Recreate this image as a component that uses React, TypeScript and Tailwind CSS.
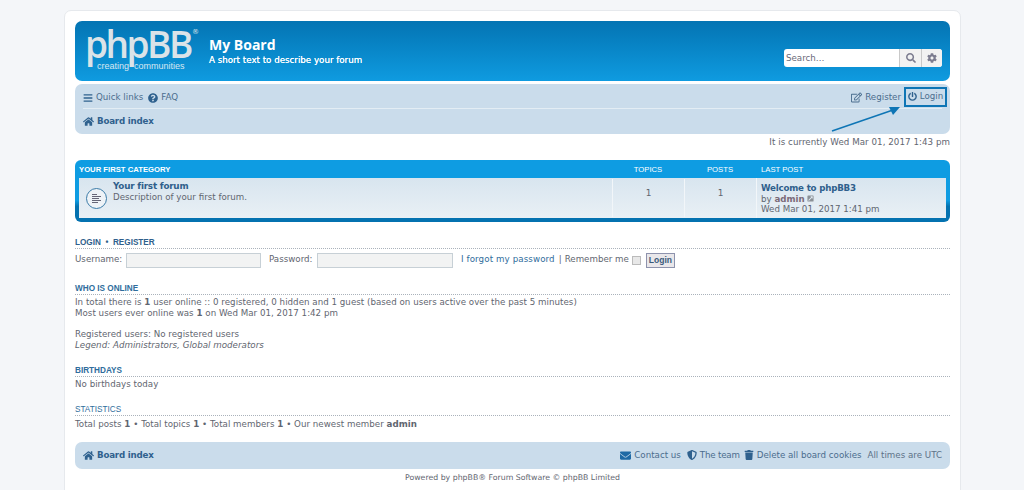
import {
  FaBars,
  FaCog,
  FaEnvelope,
  FaExternalLinkSquareAlt,
  FaHome,
  FaPowerOff,
  FaQuestionCircle,
  FaRegEdit,
  FaSearch,
  FaShieldAlt,
  FaTrash,
} from 'react-icons/fa';

const font = { fontFamily: '"DejaVu Sans", Verdana, sans-serif' };

const Section = ({ title, children, thin }: { title: string; children: React.ReactNode; thin?: boolean }) => (
  <div>
    <h3 className={`border-b border-dotted border-[#aab2bb] text-[8.2px] leading-[11px] text-[#2f6d9c] font-['Liberation_Sans'] ${thin ? 'font-normal' : 'font-bold'} uppercase`}>
      {title}
    </h3>
    <div className="pt-[2px] text-[8.7px] leading-[10.5px] tracking-[0.02px] text-[#5f6670]">{children}</div>
  </div>
);

const NavLink = ({ icon, label, bold, className = '' }: { icon: React.ReactNode; label: string; bold?: boolean; className?: string }) => (
  <span className={`flex items-center gap-[3px] ${bold ? 'font-bold tracking-[-0.2px] text-[#2f618e]' : 'text-[#4a6d8e]'} ${className}`}>
    {icon}
    {label}
  </span>
);

export default function App() {
  return (
    <div style={font} className="w-[1024px] h-[490px] overflow-hidden bg-[#f4f6f9] pt-[10px]">
      <div className="relative ml-[64px] w-[897px] h-[500px] bg-white border border-[#e6e9ed] rounded-[7px] px-[10px] pt-[10px]">
        {/* header */}
        <div className="h-[60px] rounded-[7px] bg-gradient-to-b from-[#0474b3] to-[#0f9be0] flex items-center pl-[12px] pr-[8px]">
          <div className="relative w-[112px] h-[52px] text-[#dbe3e8]">
            <div className="font-['Open_Sans'] text-[37px] leading-[34px] tracking-[-2.5px] -ml-[2px] mt-[2px] font-semibold">phpBB</div>
            <div className="absolute left-[10px] top-[36px] font-['Liberation_Sans'] text-[9px] leading-[10px] whitespace-nowrap text-[#d9e8f2]">creating&nbsp; communities</div>
            <div className="absolute left-[105px] top-[3px] text-[7px] leading-[8px]">®</div>
          </div>
          <div className="ml-[10px] -mt-[1px] text-white">
            <div className="text-[14px] leading-[17px] font-bold font-['Open_Sans']">My Board</div>
            <div className="text-[8.7px] leading-[10px] mt-[2px] [text-shadow:0_0_0.5px_white]">A short text to describe your forum</div>
          </div>
          <div className="ml-auto mt-[14px] flex h-[18px] w-[158px] rounded-[3px] bg-white overflow-hidden text-[8.7px] text-[#6a6a7a]">
            <div className="flex-1 pl-[2px] leading-[18px]">Search…</div>
            <div className="w-[22px] bg-[#f2f2f2] border-l border-[#c9c9c9] flex items-center justify-center">
              <FaSearch size={10} className="text-[#7d7d90]" />
            </div>
            <div className="w-[21px] bg-[#f2f2f2] border-l border-[#c9c9c9] flex items-center justify-center">
              <FaCog size={10} className="text-[#7d7d90]" />
            </div>
          </div>
        </div>

        {/* navbar */}
        <div className="mt-[3px] h-[50px] rounded-[7px] bg-[#cadceb] px-[8px] text-[8.7px]">
          <div className="h-[25px] pt-[4px] border-b border-[#e3edf4] flex items-center justify-between">
            <div className="flex items-center gap-[5px]">
              <NavLink icon={<FaBars size={10} className="text-[#2f618e]" />} label="Quick links" />
              <NavLink icon={<FaQuestionCircle size={10} className="text-[#2f618e]" />} label="FAQ" />
            </div>
            <div className="flex items-center gap-[3px] -mr-[5px]">
              <NavLink icon={<FaRegEdit size={11} className="text-[#4a6d8e]" />} label="Register" />
              <div className="h-[20px] w-[43px] -mt-[2px] border-2 border-[#0e75b5] flex items-center justify-center">
                <NavLink icon={<FaPowerOff size={9} className="text-[#2f618e]" />} label="Login" />
              </div>
            </div>
          </div>
          <div className="h-[24px] pt-[2px] flex items-center">
            <NavLink bold icon={<FaHome size={11} className="text-[#2f618e]" />} label="Board index" />
          </div>
        </div>

        {/* arrow from the time line up to the login button */}
        <svg className="absolute left-[766px] top-[94px]" width="72" height="28" viewBox="0 0 72 28">
          <path d="M1 26 L62 5" stroke="#0e75b5" strokeWidth="1.5" />
          <path d="M69 2 L58 2 L62 10 Z" fill="#0e75b5" />
        </svg>

        <div className="mt-[3px] text-right text-[8.7px] leading-[11px] tracking-[0.05px] text-[#5f6670]">It is currently Wed Mar 01, 2017 1:43 pm</div>

        {/* forum table */}
        <div className="mt-[12px] rounded-[6px] bg-gradient-to-b from-[#0e9ce2] from-[65%] to-[#0472b0] to-[75%] pb-[4px] px-[4px]">
          <div className="h-[18px] pt-[1px] flex items-center text-[7.7px] text-white font-['Liberation_Sans']">
            <div className="flex-1 font-bold">YOUR FIRST CATEGORY</div>
            <div className="w-[72px] text-center">TOPICS</div>
            <div className="w-[72px] text-center">POSTS</div>
            <div className="w-[190px] pl-[5px]">LAST POST</div>
          </div>
          <div className="h-[40px] flex bg-gradient-to-b from-[#d8e5ef] to-[#e9f0f5]">
            <div className="flex-1 flex items-center pl-[7px]">
              <div className="w-[21px] h-[21px] rounded-full border border-[#3a7ba8] flex items-center justify-center bg-[#eef3f7]">
                <div className="w-[9px] flex flex-col gap-[1px]">
                  <div className="h-[1px] w-[5px] bg-[#667]" />
                  <div className="h-[1px] bg-[#667]" />
                  <div className="h-[1px] w-[7px] bg-[#667]" />
                  <div className="h-[1px] bg-[#667]" />
                  <div className="h-[1px] w-[6px] bg-[#667]" />
                </div>
              </div>
              <div className="ml-[6px] -mt-[13px]">
                <div className="text-[8.8px] leading-[12px] font-bold tracking-[-0.2px] text-[#2f5f8c]">Your first forum</div>
                <div className="text-[8.7px] leading-[11px] text-[#5f6670]">Description of your first forum.</div>
              </div>
            </div>
            <div className="w-[72px] my-[1px] border-l border-[#f2f6f9] text-center text-[9px] text-[#5f6670] pt-[8px]">1</div>
            <div className="w-[72px] my-[1px] border-l border-[#f2f6f9] text-center text-[9px] text-[#5f6670] pt-[8px]">1</div>
            <div className="w-[190px] border-l border-[#f2f6f9] pl-[4px] pt-[5px] text-[8.7px] leading-[10.5px] text-[#5f6670]">
              <div className="font-bold tracking-[-0.2px] text-[#2f5f8c]">Welcome to phpBB3</div>
              <div className="flex items-center">by&nbsp;<b className="text-[#7a6a78]">admin</b>&nbsp;<FaExternalLinkSquareAlt size={7} className="text-[#8a9096]" /></div>
              <div>Wed Mar 01, 2017 1:41 pm</div>
            </div>
          </div>
        </div>

        {/* login */}
        <div className="mt-[15px]">
          <h3 className="border-b border-dotted border-[#aab2bb] text-[8.2px] leading-[11px] text-[#2f5f8c] font-bold font-['Liberation_Sans'] uppercase">Login&nbsp; •&nbsp; Register</h3>
          <div className="mt-[3px] flex items-center text-[8.7px] text-[#5f6670] h-[16px]">
            <span className="w-[48px]">Username:</span>
            <div className="ml-[3px] w-[135px] h-[15px] bg-[#f2f3f3] border border-[#c7d0d6]" />
            <span className="ml-[8px] w-[45px]">Password:</span>
            <div className="ml-[3px] w-[136px] h-[15px] bg-[#f2f3f3] border border-[#c7d0d6]" />
            <span className="ml-[8px] tracking-[0.1px] text-[#2f6d9c]">I forgot my password</span>
            <span className="ml-[4px] mr-[3px]">|</span>
            Remember me
            <span className="ml-[3px] w-[9px] h-[9px] bg-[#e8e8e8] border border-[#bbb]" />
            <span className="ml-[5px] h-[15px] w-[29px] bg-[#e9e7ea] border border-[#8e93ad] text-[#3a5a7a] font-bold text-[8.5px] leading-[13px] text-center font-['Liberation_Sans']">Login</span>
          </div>
        </div>

        <div className="mt-[15px]">
          <Section title="Who is online">
            <p>In total there is <b>1</b> user online :: 0 registered, 0 hidden and 1 guest (based on users active over the past 5 minutes)</p>
            <p>Most users ever online was <b>1</b> on Wed Mar 01, 2017 1:42 pm</p>
            <p className="mt-[11px]">Registered users: No registered users</p>
            <p className="italic">Legend: Administrators, Global moderators</p>
          </Section>
        </div>
        <div className="mt-[15px]">
          <Section title="Birthdays">
            <p>No birthdays today</p>
          </Section>
        </div>
        <div className="mt-[14px]">
          <Section title="Statistics" thin>
            <p className="pt-[1px]">Total posts <b>1</b> • Total topics <b>1</b> • Total members <b>1</b> • Our newest member <b>admin</b></p>
          </Section>
        </div>

        {/* footer */}
        <div className="mt-[13px] h-[27px] rounded-[7px] bg-[#cadceb] px-[8px] text-[8.7px] flex items-center justify-between">
          <NavLink bold icon={<FaHome size={11} className="text-[#2f618e]" />} label="Board index" />
          <div className="flex items-center gap-[6px]">
            <NavLink icon={<FaEnvelope size={11} className="text-[#1f6aa5]" />} label="Contact us" />
            <NavLink icon={<FaShieldAlt size={10} className="text-[#2f618e]" />} label="The team" className="tracking-[-0.2px] -mr-[2px]" />
            <NavLink icon={<FaTrash size={10} className="text-[#2f618e]" />} label="Delete all board cookies" />
            <span className="text-[#5d7288]">All times are UTC</span>
          </div>
        </div>

        <div className="mt-[3px] text-center text-[7.8px] leading-[11px] text-[#5f6670]">Powered by phpBB® Forum Software © phpBB Limited</div>
      </div>
    </div>
  );
}
